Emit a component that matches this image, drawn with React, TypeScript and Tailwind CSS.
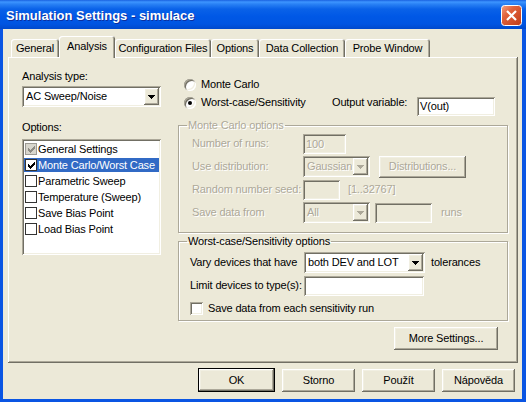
import React from 'react';

const raised = 'shadow-[inset_-1px_-1px_0_#716f64,inset_1px_1px_0_#ffffff,inset_-2px_-2px_0_#aca899,inset_2px_2px_0_#f1efe2]';
const sunken = 'shadow-[inset_1px_1px_0_#aca899,inset_-1px_-1px_0_#ffffff,inset_2px_2px_0_#716f64,inset_-2px_-2px_0_#f1efe2]';
const panelEdge = 'shadow-[inset_-1px_-1px_0_#716f64,inset_1px_1px_0_#ffffff,inset_-2px_-2px_0_#aca899]';
const tabEdge = 'shadow-[inset_1px_1px_0_#ffffff,inset_-1px_0_0_#716f64,inset_-2px_0_0_#aca899]';
const etched = 'border border-[#aca899] shadow-[inset_1px_1px_0_#ffffff,1px_1px_0_#ffffff]';
const dim = 'text-[#aca899] [text-shadow:1px_1px_0_#ffffff]';

const tabs = [
  { label: 'General', w: 'w-[48px]' },
  { label: 'Analysis', w: 'w-[56px]', active: true },
  { label: 'Configuration Files', w: 'w-[96px]' },
  { label: 'Options', w: 'w-[48px]' },
  { label: 'Data Collection', w: 'w-[86px]' },
  { label: 'Probe Window', w: 'w-[85px]' },
];

const options = [
  { label: 'General Settings', checked: true, grayed: true },
  { label: 'Monte Carlo/Worst Case', checked: true, selected: true },
  { label: 'Parametric Sweep' },
  { label: 'Temperature (Sweep)' },
  { label: 'Save Bias Point' },
  { label: 'Load Bias Point' },
];

const Arrow: React.FC<{ disabled?: boolean }> = ({ disabled }) => (
  <svg width="7" height="4" viewBox="0 0 7 4">
    <path d="M0 0H7V1H6V2H5V3H4V4H3V3H2V2H1V1H0Z" fill={disabled ? '#aca899' : '#000'} />
  </svg>
);

const Combo: React.FC<{ value: string; className: string; disabled?: boolean }> = ({ value, className, disabled }) => (
  <div className={`flex h-[21px] p-[2px] ${sunken} ${disabled ? 'bg-[#ece9d8]' : 'bg-white'} ${className}`}>
    <span className={`flex-1 overflow-hidden whitespace-nowrap pl-[2px] leading-[17px] ${disabled ? dim : ''}`}>{value}</span>
    <span className={`flex w-[15px] items-center justify-center bg-[#ece9d8] ${raised}`}>
      <Arrow disabled={disabled} />
    </span>
  </div>
);

const Edit: React.FC<{ value?: string; className: string; disabled?: boolean }> = ({ value, className, disabled }) => (
  <div className={`h-[20px] px-[3px] leading-[20px] ${sunken} ${disabled ? `bg-[#ece9d8] ${dim}` : 'bg-white'} ${className}`}>
    {value}
  </div>
);

const Radio: React.FC<{ checked?: boolean }> = ({ checked }) => (
  <span className={`flex h-[12px] w-[12px] shrink-0 items-center justify-center rounded-full bg-white ${sunken}`}>
    {checked && <span className="h-[4px] w-[4px] rounded-full bg-black" />}
  </span>
);

const CheckMark: React.FC<{ color: string }> = ({ color }) => (
  <svg width="7" height="7" viewBox="0 0 7 7">
    <path d="M0 2H1V3H2V4H3V3H4V2H5V1H6V0H7V3H6V4H5V5H4V6H3V7H2V6H1V5H0Z" fill={color} />
  </svg>
);

const ListCheck: React.FC<{ checked?: boolean; grayed?: boolean }> = ({ checked, grayed }) => (
  <span
    className={`flex h-[12px] w-[12px] shrink-0 items-center justify-center border ${
      grayed ? 'border-[#9c9a94] bg-[#d8d6cd]' : 'border-[#333333] bg-white'
    }`}
  >
    {checked && <CheckMark color={grayed ? '#8d8b84' : '#000'} />}
  </span>
);

const CloseButton = () => (
  <svg width="21" height="21" viewBox="0 0 21 21">
    <defs>
      <linearGradient id="closeFill" x1="0" y1="0" x2="1" y2="1">
        <stop offset="0" stopColor="#f4a283" />
        <stop offset="0.35" stopColor="#e1623c" />
        <stop offset="1" stopColor="#c13c17" />
      </linearGradient>
    </defs>
    <rect x="0.5" y="0.5" width="20" height="20" rx="3" fill="url(#closeFill)" stroke="#ffffff" />
    <path d="M6 6L15 15M15 6L6 15" stroke="#ffffff" strokeWidth="2.2" />
  </svg>
);

export default function App() {
  return (
    <div className="flex h-[402px] w-[526px] flex-col bg-[#0a55e3] font-['Liberation_Sans',Arial,sans-serif] text-[11px] leading-[13px] tracking-[-0.15px] text-black">
      {/* title bar */}
      <div className="flex h-[29px] shrink-0 items-center bg-[linear-gradient(180deg,#1a62e0_0px,#3d95ff_2px,#2a82f5_4px,#0a62e8_9px,#0058e6_16px,#0055e2_24px,#0049cc_29px)] pl-[6px] pr-[4px]">
        <span className="mt-[2px] flex-1 text-[13px] leading-[15px] font-bold tracking-normal text-white [text-shadow:1px_1px_0_#0c2f9e]">
          Simulation Settings - simulace
        </span>
        <span className="mt-[2px] flex">
          <CloseButton />
        </span>
      </div>

      <div className="mb-[3px] ml-[3px] mr-[4px] flex flex-1 flex-col bg-[#ece9d8] pt-[7px]">
        {/* tabs */}
        <div className="flex h-[21px] items-end pl-[8px]">
          {tabs.map((t) =>
            t.active ? (
              <div
                key={t.label}
                className={`relative z-10 -mb-[1px] flex h-[22px] ${t.w} items-center justify-center rounded-t-[3px] bg-[#ece9d8] pb-[2px] ${tabEdge}`}
              >
                {t.label}
              </div>
            ) : (
              <div
                key={t.label}
                className={`flex h-[18px] ${t.w} items-center justify-center rounded-t-[3px] bg-[#ece9d8] pt-[1px] ${tabEdge}`}
              >
                {t.label}
              </div>
            )
          )}
        </div>

        {/* tab page */}
        <div className={`ml-[5px] flex h-[306px] w-[510px] bg-[#ece9d8] ${panelEdge}`}>
          <div className="ml-[14px] flex w-[139px] flex-col pt-[13px]">
            <span>Analysis type:</span>
            <Combo className="mt-[3px] w-full" value="AC Sweep/Noise" />
            <span className="mt-[14px]">Options:</span>
            <div className={`mt-[5px] h-[116px] bg-white p-[2px] ${sunken}`}>
              {options.map((o) => (
                <div key={o.label} className="flex h-[16px] items-center">
                  <div
                    className={`flex h-[14px] flex-1 items-center pl-[1px] ${
                      o.selected ? 'bg-[#316ac5] text-white' : ''
                    }`}
                  >
                    <ListCheck checked={o.checked} grayed={o.grayed} />
                    <span className="ml-[1px] whitespace-nowrap">{o.label}</span>
                  </div>
                </div>
              ))}
            </div>
          </div>

          <div className="ml-[17px] flex w-[330px] flex-col pt-[21px]">
            <div className="flex h-[13px] items-center pl-[6px]">
              <Radio />
              <span className="ml-[5px]">Monte Carlo</span>
            </div>
            <div className="mt-[5px] flex h-[20px] items-start">
              <div className="flex h-[13px] w-[154px] items-center pl-[6px]">
                <Radio checked />
                <span className="ml-[5px] whitespace-nowrap">Worst-case/Sensitivity</span>
              </div>
              <span className="w-[85px] whitespace-nowrap">Output variable:</span>
              <div className={`mt-[1px] h-[19px] w-[78px] bg-white pl-[3px] pt-[2px] leading-[15px] ${sunken}`}>V(out)</div>
            </div>

            <fieldset className={`mt-[3px] pb-[8px] ${etched}`}>
              <legend className={`ml-[8px] px-[1px] ${dim}`}>Monte Carlo options</legend>
              <div className="flex flex-col pl-[13px]">
                <div className="flex h-[23px] items-center">
                  <span className={`w-[111px] ${dim}`}>Number of runs:</span>
                  <Edit disabled className="w-[43px]" value="100" />
                </div>
                <div className="flex h-[23px] items-center">
                  <span className={`w-[111px] ${dim}`}>Use distribution:</span>
                  <Combo disabled className="w-[67px]" value="Gaussian" />
                  <button type="button" className={`ml-[9px] h-[22px] w-[87px] bg-[#ece9d8] ${raised} ${dim}`}>
                    Distributions...
                  </button>
                </div>
                <div className="flex h-[23px] items-center">
                  <span className={`w-[111px] whitespace-nowrap ${dim}`}>Random number seed:</span>
                  <Edit disabled className="w-[37px]" />
                  <span className={`ml-[8px] ${dim}`}>[1..32767]</span>
                </div>
                <div className="flex h-[23px] items-center">
                  <span className={`w-[111px] ${dim}`}>Save data from</span>
                  <Combo disabled className="w-[67px]" value="All" />
                  <Edit disabled className="ml-[5px] w-[57px]" />
                  <span className={`ml-[9px] ${dim}`}>runs</span>
                </div>
              </div>
            </fieldset>

            <fieldset className={`mt-[2px] pb-[1px] ${etched}`}>
              <legend className="ml-[8px] px-[1px]">Worst-case/Sensitivity options</legend>
              <div className="flex flex-col pl-[11px] pt-[3px]">
                <div className="flex h-[23px] items-center">
                  <span className="w-[114px] whitespace-nowrap">Vary devices that have</span>
                  <Combo className="w-[121px]" value="both DEV and LOT" />
                  <span className="ml-[6px]">tolerances</span>
                </div>
                <div className="flex h-[23px] items-center">
                  <span className="w-[114px] whitespace-nowrap">Limit devices to type(s):</span>
                  <Edit className="w-[120px]" />
                </div>
                <div className="flex h-[22px] items-center">
                  <span className={`h-[13px] w-[13px] bg-white ${sunken}`} />
                  <span className="ml-[5px]">Save data from each sensitivity run</span>
                </div>
              </div>
            </fieldset>

            <button type="button" className={`mr-[10px] mt-[6px] h-[23px] w-[104px] self-end bg-[#ece9d8] ${raised}`}>
              More Settings...
            </button>
          </div>
        </div>

        {/* dialog buttons */}
        <div className="mt-[5px] flex items-center justify-end gap-[7px] pr-[7px]">
          <button type="button" className={`h-[24px] w-[77px] border border-black bg-[#ece9d8] ${raised}`}>
            OK
          </button>
          <button type="button" className={`h-[23px] w-[73px] bg-[#ece9d8] ${raised}`}>
            Storno
          </button>
          <button type="button" className={`h-[23px] w-[73px] bg-[#ece9d8] ${raised}`}>
            Použít
          </button>
          <button type="button" className={`h-[23px] w-[73px] bg-[#ece9d8] ${raised}`}>
            Nápověda
          </button>
        </div>
      </div>
    </div>
  );
}
